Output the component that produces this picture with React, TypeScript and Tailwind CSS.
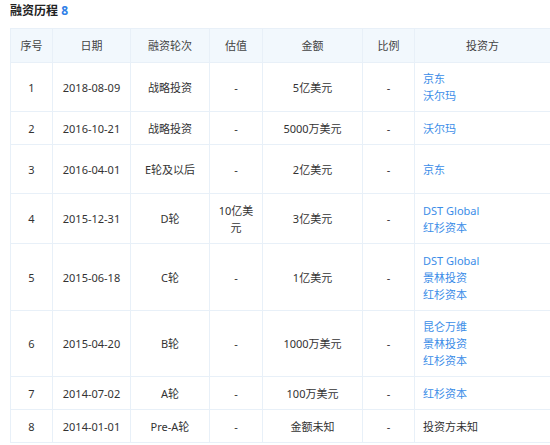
type Row = {
  no: string;
  date: string;
  round: string;
  valuation: string;
  amount: string;
  ratio: string;
  investors: string[];
  linked: boolean;
  h: string;
};

const rows: Row[] = [
  { no: "1", date: "2018-08-09", round: "战略投资", valuation: "-", amount: "5亿美元", ratio: "-", investors: ["京东", "沃尔玛"], linked: true, h: "h-[49px]" },
  { no: "2", date: "2016-10-21", round: "战略投资", valuation: "-", amount: "5000万美元", ratio: "-", investors: ["沃尔玛"], linked: true, h: "h-[33px]" },
  { no: "3", date: "2016-04-01", round: "E轮及以后", valuation: "-", amount: "2亿美元", ratio: "-", investors: ["京东"], linked: true, h: "h-[49px]" },
  { no: "4", date: "2015-12-31", round: "D轮", valuation: "10亿美元", amount: "3亿美元", ratio: "-", investors: ["DST Global", "红杉资本"], linked: true, h: "h-[50px]" },
  { no: "5", date: "2015-06-18", round: "C轮", valuation: "-", amount: "1亿美元", ratio: "-", investors: ["DST Global", "景林投资", "红杉资本"], linked: true, h: "h-[67px]" },
  { no: "6", date: "2015-04-20", round: "B轮", valuation: "-", amount: "1000万美元", ratio: "-", investors: ["昆仑万维", "景林投资", "红杉资本"], linked: true, h: "h-[66px]" },
  { no: "7", date: "2014-07-02", round: "A轮", valuation: "-", amount: "100万美元", ratio: "-", investors: ["红杉资本"], linked: true, h: "h-[33px]" },
  { no: "8", date: "2014-01-01", round: "Pre-A轮", valuation: "-", amount: "金额未知", ratio: "-", investors: ["投资方未知"], linked: false, h: "h-[33px]" },
];

const headers = ["序号", "日期", "融资轮次", "估值", "金额", "比例", "投资方"];

const cell = "flex items-center justify-center text-center border-r border-b border-[#e8f0f8]";

export default function App() {
  return (
    <div
      className="w-[550px] h-[445px] overflow-hidden bg-white text-[11px] leading-[17px] text-[#333]"
      style={{ fontFamily: '"Noto Sans", "Noto Sans CJK SC", sans-serif' }}
    >
      <div className="h-[28px] pl-[10px] pt-[2px] text-[12px] leading-[18px] font-bold text-[#222]">
        融资历程 <span className="text-[#2f80e7]">8</span>
      </div>

      <div className="ml-[10px] w-[540px] border-l border-t border-[#e8f0f8] grid grid-cols-[42px_78px_79px_53px_100px_52px_135px]">
        {headers.map((h, i) => (
          <div
            key={h}
            className={`${cell} h-[34px] bg-[#f2f8fd] text-[#444] ${i === 6 ? "border-r-0" : ""}`}
          >
            {h}
          </div>
        ))}

        {rows.map((r) => (
          <div key={r.no} className="contents">
            <div className={`${cell} ${r.h}`}>{r.no}</div>
            <div className={`${cell} ${r.h}`}>{r.date}</div>
            <div className={`${cell} ${r.h}`}>{r.round}</div>
            <div className={`${cell} ${r.h} px-[6px]`}>{r.valuation}</div>
            <div className={`${cell} ${r.h}`}>{r.amount}</div>
            <div className={`${cell} ${r.h}`}>{r.ratio}</div>
            <div className={`${r.h} flex flex-col justify-center pl-[8px] border-b border-[#e8f0f8]`}>
              {r.investors.map((name) => (
                <span key={name} className={r.linked ? "text-[#3b8de8]" : "text-[#333]"}>
                  {name}
                </span>
              ))}
            </div>
          </div>
        ))}
      </div>
    </div>
  );
}
